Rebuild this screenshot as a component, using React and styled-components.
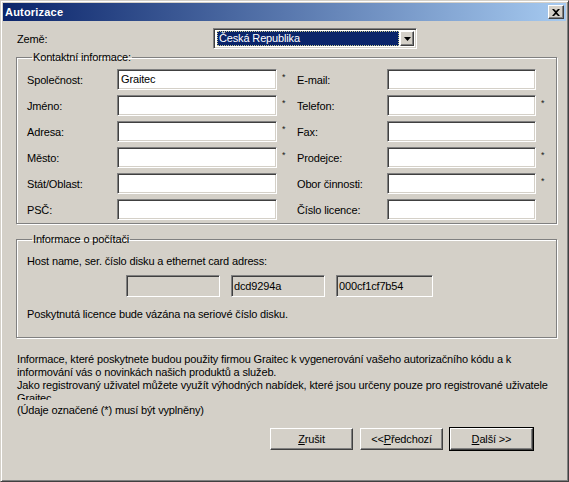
import { Fragment } from 'react'
import styled, { createGlobalStyle, css } from 'styled-components'

const Global = createGlobalStyle`
  html, body {
    margin: 0;
    padding: 0;
    background: #d4d0c8;
  }
  body {
    font-family: "Liberation Sans", Arial, sans-serif;
    font-size: 11px;
    letter-spacing: -0.15px;
    color: #000;
  }
`

const sunken = css`
  box-sizing: border-box;
  border: 1px solid;
  border-color: #808080 #fff #fff #808080;
  box-shadow: inset 1px 1px 0 #404040, inset -1px -1px 0 #d4d0c8;
`

const raised = css`
  box-sizing: border-box;
  background: #d4d0c8;
  border: 1px solid;
  border-color: #fff #404040 #404040 #fff;
  box-shadow: inset -1px -1px 0 #808080;
`

const Window = styled.div`
  width: 569px;
  height: 482px;
  box-sizing: border-box;
  background: #d4d0c8;
  border: 1px solid;
  border-color: #d4d0c8 #404040 #404040 #d4d0c8;
  box-shadow: inset 1px 1px 0 #fff, inset -1px -1px 0 #808080;
  padding: 2px;
  display: flex;
  flex-direction: column;
  overflow: hidden;
`

const TitleBar = styled.div`
  height: 18px;
  flex-shrink: 0;
  background: linear-gradient(to right, #0a246a, #a6caf0);
  display: flex;
  align-items: center;
  justify-content: space-between;
  padding: 0 2px;
`

const Title = styled.span`
  color: #fff;
  font-weight: bold;
  font-size: 11px;
  letter-spacing: 0.2px;
`

const CloseButton = styled.button`
  ${raised};
  width: 16px;
  height: 14px;
  padding: 0;
  display: flex;
  align-items: center;
  justify-content: center;
`

const Body = styled.div`
  padding: 0 0 0 13px;
  display: flex;
  flex-direction: column;
`

const CountryRow = styled.div`
  display: flex;
  align-items: center;
  margin-top: 7px;
  height: 21px;
`

const CountryLabel = styled.span`
  width: 196px;
  padding-left: 1px;
`

const Combo = styled.div`
  ${sunken};
  width: 204px;
  height: 21px;
  background: #fff;
  display: flex;
  padding: 2px 2px 2px 3px;
  gap: 1px;
`

const ComboValue = styled.div`
  flex: 1;
  background: #0a246a;
  color: #fff;
  outline: 1px dotted #c8c890;
  outline-offset: -1px;
  line-height: 15px;
  padding-left: 2px;
`

const ComboButton = styled.div`
  ${raised};
  width: 14px;
  display: flex;
  align-items: center;
  justify-content: center;
`

const Group = styled.fieldset`
  margin: ${(p) => p.$top}px 0 0 0;
  width: 541px;
  box-sizing: border-box;
  border: 1px solid #808080;
  box-shadow: inset 1px 1px 0 #fff, 1px 1px 0 #fff;
  padding: ${(p) => p.$pad};
  min-width: 0;
`

const Legend = styled.legend`
  padding: 0 1px;
  margin-left: 5px;
  line-height: 14px;
`

const Grid = styled.div`
  display: grid;
  grid-template-columns: 90px 160px 20px 90px 149px 1fr;
  grid-auto-rows: 21px;
  row-gap: 5px;
  align-items: center;
`

const Input = styled.div`
  ${sunken};
  height: 21px;
  background: ${(p) => (p.$disabled ? '#d4d0c8' : '#fff')};
  padding: 0 3px;
  line-height: 19px;
  white-space: nowrap;
  overflow: hidden;
`

const Star = styled.span`
  padding-left: 5px;
  font-size: 9px;
  line-height: 1;
  margin-top: -4px;
  color: #202020;
`

const Text = styled.div`
  line-height: 13px;
  white-space: nowrap;
`

const FieldRow = styled.div`
  display: flex;
  gap: 11px;
  margin: 7px 0 11px 99px;
`

const SmallField = styled(Input)`
  width: ${(p) => p.$w}px;
  height: 22px;
  padding: 0 2px;
  line-height: 20px;
`

const Info = styled.div`
  margin-top: 15px;
  padding-left: 1px;
  height: 47px;
  overflow: hidden;
  line-height: 13px;
  white-space: nowrap;
`

const Note = styled(Text)`
  margin-top: 4px;
  padding-left: 1px;
`

const ButtonRow = styled.div`
  width: 541px;
  box-sizing: border-box;
  display: flex;
  justify-content: flex-end;
  gap: 7px;
  margin-top: 11px;
  padding-right: 24px;
`

const Button = styled.button`
  ${raised};
  width: 83px;
  height: 22px;
  padding: 0;
  font-family: inherit;
  font-size: 11px;
  font-weight: normal;
  letter-spacing: inherit;
  color: #000;
  ${(p) =>
    p.$default &&
    css`
      outline: 1px solid #000;
    `}
`

const contacts = [
  ['Společnost:', 'Graitec', true, 'E-mail:', false],
  ['Jméno:', '', true, 'Telefon:', true],
  ['Adresa:', '', true, 'Fax:', false],
  ['Město:', '', true, 'Prodejce:', true],
  ['Stát/Oblast:', '', false, 'Obor činnosti:', true],
  ['PSČ:', '', false, 'Číslo licence:', false],
]

export default function App() {
  return (
    <>
      <Global />
      <Window>
        <TitleBar>
          <Title>Autorizace</Title>
          <CloseButton aria-label="Zavřít">
            <svg width="8" height="7" viewBox="0 0 8 7">
              <path d="M0 0h2l2 2 2-2h2L5 3.5 8 7H6L4 5 2 7H0l3-3.5z" fill="#000" />
            </svg>
          </CloseButton>
        </TitleBar>
        <Body>
          <CountryRow>
            <CountryLabel>Země:</CountryLabel>
            <Combo>
              <ComboValue>Česká Republika</ComboValue>
              <ComboButton>
                <svg width="7" height="4" viewBox="0 0 7 4">
                  <path d="M0 0h7L3.5 4z" fill="#000" />
                </svg>
              </ComboButton>
            </Combo>
          </CountryRow>

          <Group $top={1} $pad="5px 0 3px 10px">
            <Legend>Kontaktní informace:</Legend>
            <Grid>
              {contacts.map(([l, v, s, r, rs]) => (
                <Fragment key={l}>
                  <span>{l}</span>
                  <Input>{v}</Input>
                  <Star>{s ? '*' : ''}</Star>
                  <span>{r}</span>
                  <Input />
                  <Star>{rs ? '*' : ''}</Star>
                </Fragment>
              ))}
            </Grid>
          </Group>

          <Group $top={8} $pad="9px 0 16px 10px">
            <Legend>Informace o počítači</Legend>
            <Text>Host name, ser. číslo disku a ethernet card adress:</Text>
            <FieldRow>
              <SmallField $disabled $w={94} />
              <SmallField $disabled $w={94}>dcd9294a</SmallField>
              <SmallField $disabled $w={97}>000cf1cf7b54</SmallField>
            </FieldRow>
            <Text>Poskytnutá licence bude vázána na seriové číslo disku.</Text>
          </Group>

          <Info>
            Informace, které poskytnete budou použity firmou Graitec k vygenerování vašeho autorizačního kódu a k
            <br />
            informování vás o novinkách našich produktů a služeb.
            <br />
            Jako registrovaný uživatel můžete využít výhodných nabídek, které jsou určeny pouze pro registrované uživatele
            <br />
            Graitec.
          </Info>
          <Note>(Údaje označené (*) musí být vyplněny)</Note>

          <ButtonRow>
            <Button>
              <u>Z</u>rušit
            </Button>
            <Button>
              &lt;&lt;<u>P</u>ředchozí
            </Button>
            <Button $default>
              <u>D</u>alší &gt;&gt;
            </Button>
          </ButtonRow>
        </Body>
      </Window>
    </>
  )
}
